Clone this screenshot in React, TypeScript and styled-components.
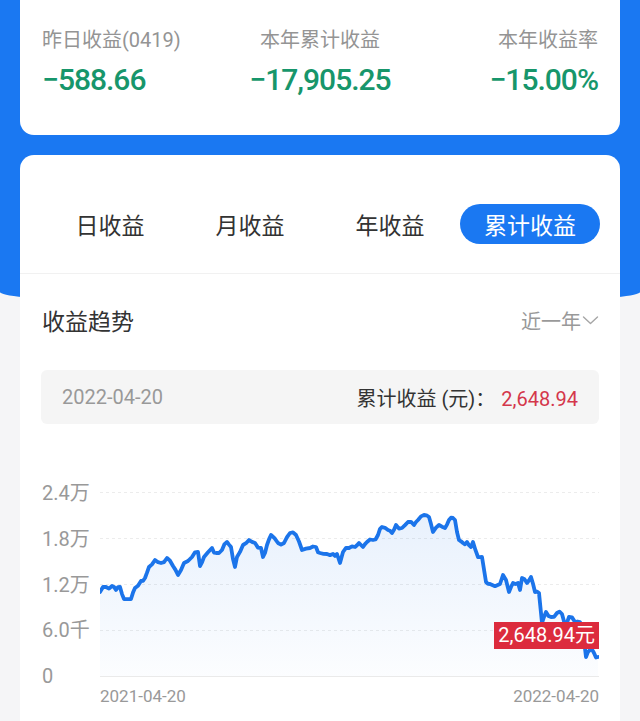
import React from 'react';
import styled, { createGlobalStyle } from 'styled-components';

const GlobalStyle = createGlobalStyle`
  html, body { margin: 0; padding: 0; background: #f5f5f7; }
  body { font-family: Roboto, "Noto Sans CJK SC", sans-serif; -webkit-font-smoothing: antialiased; }
  * { box-sizing: border-box; }
`;

const BLUE = '#1a78f2';

const Page = styled.div`
  position: relative;
  min-height: 721px;
  padding: 0 20px;
  overflow: hidden;
  &::before {
    content: '';
    position: absolute;
    left: 0;
    right: 0;
    top: 0;
    height: 306px;
    background: ${BLUE};
    border-radius: 0 0 50% 50% / 0 0 14px 14px;
  }
`;

const SummaryCard = styled.section`
  position: relative;
  height: 135px;
  background: #fff;
  border-radius: 0 0 14px 14px;
  padding: 26px 22px 0;
  display: grid;
  grid-template-columns: repeat(3, 1fr);
`;

const Stat = styled.div<{ $align: 'left' | 'center' | 'right' }>`
  display: flex;
  flex-direction: column;
  align-items: ${(p) => (p.$align === 'left' ? 'flex-start' : p.$align === 'right' ? 'flex-end' : 'center')};
`;

const StatLabel = styled.div`
  font-size: 20px;
  line-height: 28px;
  color: #949494;
  white-space: nowrap;
`;

const StatValue = styled.div`
  margin-top: 6px;
  font-size: 30px;
  line-height: 40px;
  font-weight: 500;
  color: #17966b;
  letter-spacing: -1px;
  white-space: nowrap;
`;

const MainCard = styled.section`
  position: relative;
  margin-top: 20px;
  min-height: 566px;
  background: #fff;
  border-radius: 14px 14px 0 0;
`;

const Tabs = styled.div`
  display: grid;
  grid-template-columns: repeat(4, 140px);
  padding: 49px 20px 29px;
`;

const Tab = styled.div<{ $active?: boolean }>`
  height: 40px;
  border-radius: 20px;
  display: flex;
  align-items: center;
  justify-content: center;
  font-size: 23px;
  color: ${(p) => (p.$active ? '#fff' : '#333')};
  background: ${(p) => (p.$active ? BLUE : 'transparent')};
`;

const Divider = styled.div`
  height: 1px;
  background: #f1f1f1;
`;

const Section = styled.div`
  padding: 30px 21px 0;
`;

const TitleRow = styled.div`
  display: flex;
  justify-content: space-between;
  align-items: center;
  height: 32px;
`;

const Title = styled.div`
  font-size: 23px;
  color: #333;
  padding-left: 1px;
`;

const RangeSelect = styled.div`
  display: flex;
  align-items: center;
  font-size: 20px;
  color: #999;
  gap: 1px;
`;

const InfoBox = styled.div`
  margin-top: 34px;
  height: 54px;
  background: #f5f5f5;
  border-radius: 6px;
  display: flex;
  align-items: center;
  justify-content: space-between;
  padding: 0 21px;
`;

const InfoDate = styled.div`
  font-size: 20px;
  color: #999;
`;

const InfoValue = styled.div`
  font-size: 20px;
  color: #333;
  white-space: nowrap;
`;

const Red = styled.span`
  margin-left: 6px;
  color: #d4374b;
`;

const Chart = styled.div`
  margin-top: 57px;
  display: grid;
  grid-template-columns: 59px 499px;
`;

const YAxis = styled.div`
  height: 207px;
  padding-left: 1px;
  display: flex;
  flex-direction: column;
  justify-content: space-between;
  font-size: 20px;
  line-height: 24px;
  color: #999;
`;

const Plot = styled.div`
  position: relative;
  height: 207px;
  svg { display: block; }
`;

const Tooltip = styled.div`
  position: absolute;
  right: 0;
  top: 141px;
  height: 27px;
  padding: 0 4px;
  background: #dc2b3d;
  color: #fff;
  font-size: 20px;
  line-height: 27px;
  white-space: nowrap;
`;

const XAxis = styled.div`
  grid-column: 2;
  margin-top: -2px;
  display: flex;
  justify-content: space-between;
  font-size: 17px;
  line-height: 20px;
  color: #999;
`;

const anchors: [number, number][] = [
  [100, 592], [106, 587], [112, 586], [116, 590], [120, 587], [124, 599], [131, 599], [135, 588], [141, 581], [145, 578],
  [149, 567], [155, 560], [161, 563], [167, 558], [173, 566], [178, 575], [184, 563], [192, 557], [198, 552], [200, 566],
  [204, 557], [212, 548], [216, 553], [222, 550], [227, 542], [231, 547], [235, 567], [237, 557], [243, 545], [249, 540],
  [255, 543], [261, 548], [263, 557], [267, 545], [271, 535], [278, 543], [284, 543], [290, 533], [296, 535], [302, 550],
  [310, 548], [316, 547], [320, 553], [327, 554], [333, 554], [337, 554], [340, 563], [343, 552], [349, 548], [355, 547],
  [359, 543], [363, 547], [367, 542], [373, 540], [378, 535], [382, 527], [388, 530], [392, 533], [396, 525], [402, 528],
  [408, 522], [414, 525], [418, 520], [424, 515], [429, 517], [433, 532], [439, 525], [445, 528], [449, 520], [453, 518],
  [455, 520], [459, 540], [463, 543], [467, 542], [471, 547], [473, 542], [478, 557], [482, 557], [486, 582], [490, 584],
  [500, 584], [503, 575], [506, 580], [509, 592], [513, 583], [518, 583], [520, 590], [522, 578], [527, 583], [531, 577],
  [535, 592], [539, 593], [542, 623], [546, 612], [551, 617], [557, 613], [562, 614], [565, 625], [569, 617], [575, 622],
  [580, 622], [583, 632], [586, 657], [590, 650], [594, 653], [598, 657],
];

function buildPoints(): [number, number][] {
  let seed = 7;
  const rnd = () => {
    seed = (seed * 16807) % 2147483647;
    return seed / 2147483647;
  };
  const pts: [number, number][] = [];
  for (let i = 0; i < anchors.length; i++) {
    const [x, y] = anchors[i];
    pts.push([x - 100, y - 481]);
    if (i < anchors.length - 1) {
      const [nx, ny] = anchors[i + 1];
      if (nx - x >= 4) {
        const mx = (x + nx) / 2;
        const my = (y + ny) / 2 + (rnd() - 0.5) * 5;
        pts.push([mx - 100, my - 481]);
      }
    }
  }
  return pts;
}

const points = buildPoints();
const linePath = points.map((p, i) => `${i ? 'L' : 'M'}${p[0].toFixed(1)},${p[1].toFixed(1)}`).join(' ');
const areaPath = `${linePath} L${points[points.length - 1][0].toFixed(1)},195 L0,195 Z`;

const gridYs = [11, 57, 103, 149];

const stats = [
  { label: '昨日收益(0419)', value: '−588.66', align: 'left' as const },
  { label: '本年累计收益', value: '−17,905.25', align: 'center' as const },
  { label: '本年收益率', value: '−15.00%', align: 'right' as const },
];

const tabs = ['日收益', '月收益', '年收益', '累计收益'];

export default function App() {
  return (
    <>
      <GlobalStyle />
      <Page>
        <SummaryCard>
          {stats.map((s) => (
            <Stat key={s.label} $align={s.align}>
              <StatLabel>{s.label}</StatLabel>
              <StatValue>{s.value}</StatValue>
            </Stat>
          ))}
        </SummaryCard>
        <MainCard>
          <Tabs>
            {tabs.map((t, i) => (
              <Tab key={t} $active={i === 3}>{t}</Tab>
            ))}
          </Tabs>
          <Divider />
          <Section>
            <TitleRow>
              <Title>收益趋势</Title>
              <RangeSelect>
                近一年
                <svg width="17" height="12" viewBox="0 0 17 12" fill="none">
                  <path d="M1.5 3 L8.5 9.5 L15.5 3" stroke="#a6a6a6" strokeWidth="1.4" strokeLinecap="round" strokeLinejoin="round" />
                </svg>
              </RangeSelect>
            </TitleRow>
            <InfoBox>
              <InfoDate>2022-04-20</InfoDate>
              <InfoValue>
                累计收益 (元)：<Red>2,648.94</Red>
              </InfoValue>
            </InfoBox>
            <Chart>
              <YAxis>
                <span>2.4万</span>
                <span>1.8万</span>
                <span>1.2万</span>
                <span>6.0千</span>
                <span>0</span>
              </YAxis>
              <Plot>
                <svg width="499" height="207" viewBox="0 0 499 207">
                  <defs>
                    <linearGradient id="areaFill" x1="0" y1="0" x2="0" y2="1">
                      <stop offset="0%" stopColor="#1a73e8" stopOpacity="0.1" />
                      <stop offset="100%" stopColor="#1a73e8" stopOpacity="0.015" />
                    </linearGradient>
                  </defs>
                  {gridYs.map((y) => (
                    <line key={y} x1="0" x2="499" y1={y + 0.5} y2={y + 0.5} stroke="#ececec" strokeWidth="1" strokeDasharray="3 3" />
                  ))}
                  <line x1="0" x2="499" y1="195.5" y2="195.5" stroke="#eaeaea" strokeWidth="1.2" />
                  <path d={areaPath} fill="url(#areaFill)" />
                  <path d={linePath} fill="none" stroke="#1b74ea" strokeWidth="3.8" strokeLinejoin="round" strokeLinecap="round" />
                </svg>
                <Tooltip>2,648.94元</Tooltip>
              </Plot>
              <XAxis>
                <span>2021-04-20</span>
                <span>2022-04-20</span>
              </XAxis>
            </Chart>
          </Section>
        </MainCard>
      </Page>
    </>
  );
}
